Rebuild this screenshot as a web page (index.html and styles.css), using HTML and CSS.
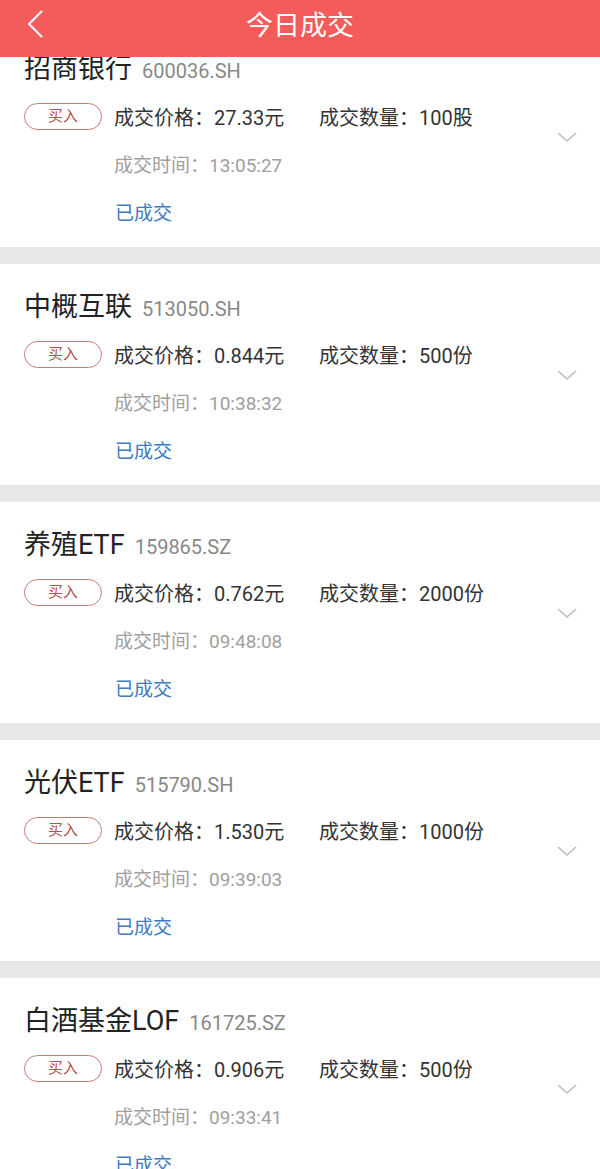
FILE: index.html
```html
<!DOCTYPE html>
<html lang="zh-CN">
<head>
    <meta charset="UTF-8">
    <meta name="viewport" content="width=device-width, initial-scale=1.0">
    <title>今日成交</title>
    <link rel="stylesheet" href="styles.css">
</head>
<body>

<div class="header">
    <span class="back">
        <svg width="24" height="32" viewBox="0 0 24 32"><polyline points="18,3 5,16 18,29" fill="none" stroke="#fff" stroke-width="2.2"/></svg>
    </span>
    <div class="header-title">今日成交</div>
</div>

<div class="list">
    <div class="card">
        <div class="card-body">
            <div class="name">招商银行<span class="code">600036.SH</span></div>
            <div class="row">
                <span class="badge">买入</span>
                <span class="price">成交价格：27.33元</span>
                <span>成交数量：100股</span>
            </div>
            <div class="time">成交时间：13:05:27</div>
            <div class="status">已成交</div>
        </div>
        <svg class="arrow" width="22" height="14" viewBox="0 0 22 14"><polyline points="2,3 11,11 20,3" fill="none" stroke="#bdbdbd" stroke-width="1.6"/></svg>
    </div>

    <div class="card">
        <div class="card-body">
            <div class="name">中概互联<span class="code">513050.SH</span></div>
            <div class="row">
                <span class="badge">买入</span>
                <span class="price">成交价格：0.844元</span>
                <span>成交数量：500份</span>
            </div>
            <div class="time">成交时间：10:38:32</div>
            <div class="status">已成交</div>
        </div>
        <svg class="arrow" width="22" height="14" viewBox="0 0 22 14"><polyline points="2,3 11,11 20,3" fill="none" stroke="#bdbdbd" stroke-width="1.6"/></svg>
    </div>

    <div class="card">
        <div class="card-body">
            <div class="name">养殖ETF<span class="code">159865.SZ</span></div>
            <div class="row">
                <span class="badge">买入</span>
                <span class="price">成交价格：0.762元</span>
                <span>成交数量：2000份</span>
            </div>
            <div class="time">成交时间：09:48:08</div>
            <div class="status">已成交</div>
        </div>
        <svg class="arrow" width="22" height="14" viewBox="0 0 22 14"><polyline points="2,3 11,11 20,3" fill="none" stroke="#bdbdbd" stroke-width="1.6"/></svg>
    </div>

    <div class="card">
        <div class="card-body">
            <div class="name">光伏ETF<span class="code">515790.SH</span></div>
            <div class="row">
                <span class="badge">买入</span>
                <span class="price">成交价格：1.530元</span>
                <span>成交数量：1000份</span>
            </div>
            <div class="time">成交时间：09:39:03</div>
            <div class="status">已成交</div>
        </div>
        <svg class="arrow" width="22" height="14" viewBox="0 0 22 14"><polyline points="2,3 11,11 20,3" fill="none" stroke="#bdbdbd" stroke-width="1.6"/></svg>
    </div>

    <div class="card">
        <div class="card-body">
            <div class="name">白酒基金LOF<span class="code">161725.SZ</span></div>
            <div class="row">
                <span class="badge">买入</span>
                <span class="price">成交价格：0.906元</span>
                <span>成交数量：500份</span>
            </div>
            <div class="time">成交时间：09:33:41</div>
            <div class="status">已成交</div>
        </div>
        <svg class="arrow" width="22" height="14" viewBox="0 0 22 14"><polyline points="2,3 11,11 20,3" fill="none" stroke="#bdbdbd" stroke-width="1.6"/></svg>
    </div>
</div>

</body>
</html>
```

FILE: styles.css
```css
body {
    margin: 0;
    background-color: #e8e8e8;
    font-family: Roboto, "Noto Sans CJK SC", sans-serif;
    color: #222;
}
.header {
    position: fixed;
    top: 0;
    left: 0;
    right: 0;
    height: 57px;
    background-color: #f45b5b;
    display: flex;
    align-items: center;
    justify-content: center;
    z-index: 10;
}
.back {
    position: absolute;
    left: 24px;
    top: 8px;
}
.header-title {
    color: #fff;
    font-size: 27px;
    line-height: 50px;
    margin-bottom: 6px;
}
.list {
    margin-top: 26px;
}
.card {
    background-color: #fff;
    height: 221px;
    box-sizing: border-box;
    padding: 25px 22px 0 24px;
    margin-bottom: 17px;
    display: flex;
    align-items: center;
}
.card-body {
    flex: 1;
    align-self: flex-start;
}
.name {
    font-size: 27px;
    line-height: 36px;
    color: #222;
}
.code {
    font-size: 20px;
    color: #888;
    margin-left: 10px;
}
.row {
    display: flex;
    align-items: center;
    margin-top: 3px;
    height: 48px;
    font-size: 20px;
    color: #333;
}
.badge {
    width: 76px;
    height: 25px;
    border: 1px solid #c77a7a;
    border-radius: 14px;
    color: #b24f4f;
    font-size: 15px;
    line-height: 25px;
    text-align: center;
    margin-right: 12px;
}
.price {
    width: 205px;
}
.time {
    margin-left: 90px;
    line-height: 51px;
    font-size: 19px;
    color: #a0a0a0;
}
.status {
    margin-left: 91px;
    line-height: 46px;
    font-size: 19px;
    color: #3f7bc2;
}
.arrow {
    margin-top: -24px;
}
```
